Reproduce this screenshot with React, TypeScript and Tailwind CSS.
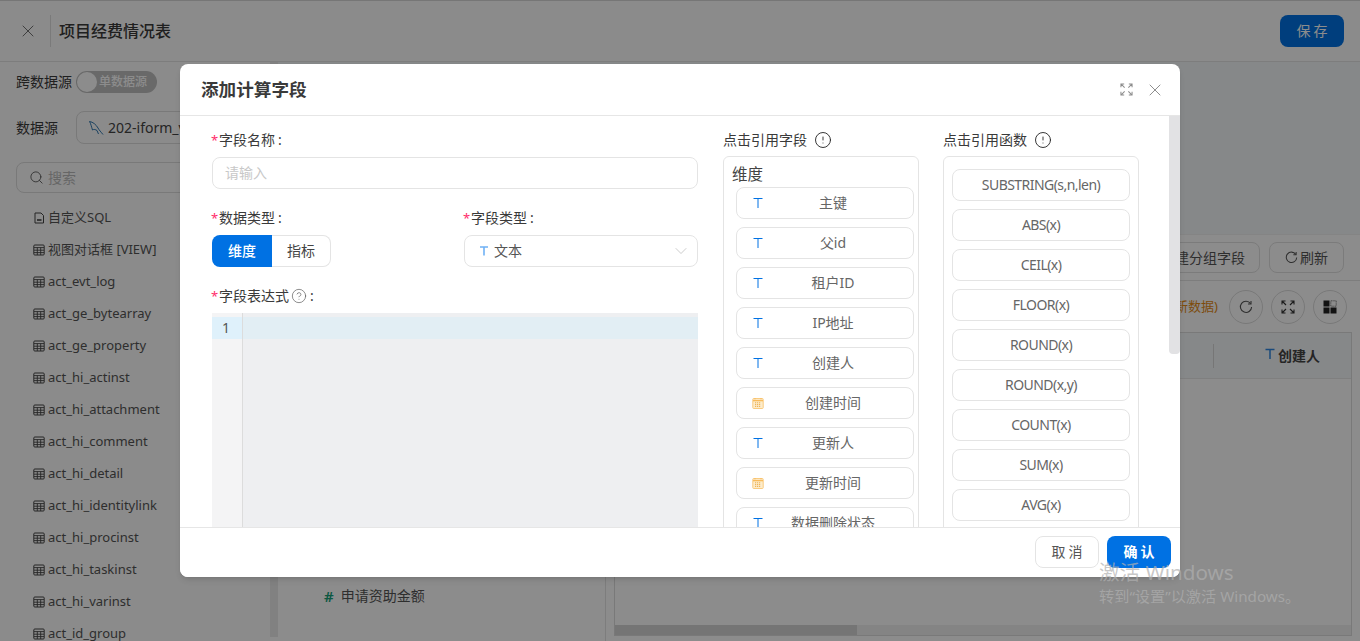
import React from "react";
import { X, ChevronDown, Search, CircleAlert, CircleHelp } from "lucide-react";

const font = { fontFamily: '"Noto Sans","Noto Sans CJK SC",sans-serif' };

const TIcon = ({ className = "" }: { className?: string }) => (
  <svg viewBox="0 0 12 12" width="12" height="12" className={className} fill="none">
    <path d="M1.5 1.5H10.5M6 1.5V11" stroke="#0071e3" strokeWidth="1" />
  </svg>
);
const Cal = () => (
  <svg viewBox="0 0 12 12" width="12" height="12" fill="none">
    <rect x="0.8" y="1.5" width="10.4" height="10" rx="0.8" fill="#fdeccb" stroke="#f9cb80" strokeWidth="1" />
    <path d="M1 3.6H11" stroke="#f7bb5c" strokeWidth="1.4" />
    <path d="M3 1V2.4M9 1V2.4" stroke="#f7bb5c" strokeWidth="1" />
    <path d="M3 5.8H9M3 7.6H9M3 9.4H9" stroke="#eaa840" strokeWidth="0.9" strokeDasharray="1.2 0.8" />
  </svg>
);
const TableIcon = () => (
  <svg viewBox="0 0 12 12" width="12" height="12" fill="none" className="shrink-0">
    <rect x="0.8" y="1" width="10.4" height="10" rx="1" stroke="#444" strokeWidth="1" />
    <path d="M1 3.6H11M1 6.2H11M1 8.6H11M4.3 3.6V11M7.7 3.6V11" stroke="#444" strokeWidth="0.9" />
  </svg>
);
const FileIcon = () => (
  <svg viewBox="0 0 12 12" width="12" height="12" fill="none" className="shrink-0">
    <path d="M2 1H8L10.5 3.5V11H2Z" stroke="#444" strokeWidth="1" />
    <path d="M4 8H8.5" stroke="#444" strokeWidth="1.6" />
  </svg>
);
const Expand = ({ size = 14, color = "#8c8c8c", w = 1.1 }: { size?: number; color?: string; w?: number }) => (
  <svg viewBox="0 0 14 14" width={size} height={size} fill="none" stroke={color} strokeWidth={w}>
    <path d="M1 4.5V1H4.5M1 1L5 5M9.5 1H13V4.5M13 1L9 5M1 9.5V13H4.5M1 13L5 9M13 9.5V13H9.5M13 13L9 9" />
  </svg>
);
const Refresh = ({ size = 14, color = "#555" }: { size?: number; color?: string }) => (
  <svg viewBox="0 0 14 14" width={size} height={size} fill="none" stroke={color} strokeWidth="1.1">
    <path d="M11.6 3.6A5.6 5.6 0 1 0 12.6 7" />
    <path d="M12 1V4H9" />
  </svg>
);
const Grid = () => (
  <svg viewBox="0 0 14 14" width="14" height="14">
    <rect x="0.5" y="0.5" width="6" height="6" fill="#222" />
    <rect x="7.8" y="0.8" width="5.4" height="5.4" fill="none" stroke="#444" strokeWidth="0.8" strokeDasharray="1 0.8" />
    <rect x="0.5" y="7.5" width="6" height="6" fill="#222" />
    <rect x="7.5" y="7.5" width="6" height="6" fill="#222" />
  </svg>
);
const Dolphin = () => (
  <svg viewBox="0 0 16 16" width="16" height="16" fill="none" stroke="#1a6aa8" strokeWidth="0.9" className="shrink-0">
    <path d="M1.5 1.5C5 2 8 4.5 10 8C11 10 13 12 15 14.5M1.5 1.5C3 4 3.5 7 4.5 10M4.5 10C6 9 7.5 9.5 9 10.5M9 10.5L10.5 14" />
  </svg>
);

const tables = ["act_evt_log", "act_ge_bytearray", "act_ge_property", "act_hi_actinst", "act_hi_attachment", "act_hi_comment", "act_hi_detail", "act_hi_identitylink", "act_hi_procinst", "act_hi_taskinst", "act_hi_varinst", "act_id_group"];

const fields: [string, "t" | "d"][] = [
  ["主键", "t"], ["父id", "t"], ["租户ID", "t"], ["IP地址", "t"], ["创建人", "t"],
  ["创建时间", "d"], ["更新人", "t"], ["更新时间", "d"], ["数据删除状态", "t"],
];
const funcs = ["SUBSTRING(s,n,len)", "ABS(x)", "CEIL(x)", "FLOOR(x)", "ROUND(x)", "ROUND(x,y)", "COUNT(x)", "SUM(x)", "AVG(x)"];

const Label = ({ children, className = "" }: { children: React.ReactNode; className?: string }) => (
  <div className={`flex items-center h-[22px] text-sm text-[#3a3a3a] ${className}`}>
    <span className="w-[7px] -ml-[1px] mr-[1px] text-[#ff2d6b] text-[13px] leading-none">*</span>
    {children}
    <span className="ml-[3px]">:</span>
  </div>
);

function Background() {
  return (
    <div className="w-[1360px] h-[641px] flex flex-col bg-white border-t border-[#d8d8d8]">
      <div className="h-[61px] shrink-0 flex items-center pl-[18px] pr-4 border-b border-[#e4e4e4] bg-[#fdfdfd]">
        <X size={20} strokeWidth={1.1} color="#666" />
        <div className="w-px h-8 bg-[#dedede] ml-3 mr-2" />
        <div className="text-base font-medium text-[#3a3a3a]">项目经费情况表</div>
        <div className="ml-auto w-16 h-8 rounded-lg bg-[#0071e3] text-white text-sm flex items-center justify-center tracking-[3px] pl-[3px]">保存</div>
      </div>
      <div className="flex-1 flex min-h-0">
        <div className="w-[270px] shrink-0 px-4 overflow-hidden bg-[#fdfdfd]">
          <div className="flex items-center h-[22px] mt-[9px] text-sm text-[#3a3a3a] whitespace-nowrap">
            跨数据源
            <div className="ml-[4px] w-[81px] h-[22px] rounded-full bg-[#bfbfbf] flex items-center pl-[1px] shrink-0">
              <div className="w-5 h-5 rounded-full bg-white" />
              <span className="ml-[2px] text-xs font-medium text-white">单数据源</span>
            </div>
          </div>
          <div className="flex items-center mt-[18px] text-sm text-[#3a3a3a]">
            <span className="w-[60px] shrink-0 whitespace-nowrap">数据源</span>
            <div className="w-[230px] h-[33px] shrink-0 border border-[#dcdcdc] rounded-lg flex items-center pl-[11px] gap-[4px]">
              <Dolphin />
              <span className="text-sm text-[#444] whitespace-nowrap">202-iform_v2</span>
            </div>
          </div>
          <div className="mt-[18px] w-[290px] h-[31px] border border-[#dcdcdc] rounded-lg flex items-center pl-[12px] gap-[4px] text-sm text-[#bbb]">
            <Search size={15} color="#555" strokeWidth={1.4} />
            搜索
          </div>
          <div className="mt-[8px] pl-[17px] text-[13px] text-[#555]">
            <div className="h-[33px] flex items-center gap-[3px]"><FileIcon />自定义SQL</div>
            <div className="h-[32px] flex items-center gap-[3px]"><TableIcon />视图对话框 [VIEW]</div>
            {tables.map((t) => (
              <div key={t} className="h-[32px] flex items-center gap-[3px]"><TableIcon />{t}</div>
            ))}
          </div>
        </div>
        <div className="w-2 shrink-0 mb-1 bg-[#ececec]" />
        <div className="flex-1 flex flex-col min-w-0">
          <div className="h-[173px] shrink-0 bg-[#f5f7fa] border-b border-[#f0f0f0]" />
          <div className="h-[46px] shrink-0 border-b border-[#e4e4e4] flex items-center justify-end gap-[9px] pr-4">
            <div className="h-[31px] w-[114px] border border-[#e0e0e0] rounded-lg text-sm text-[#555] flex items-center justify-center">新建分组字段</div>
            <div className="h-[31px] w-[75px] border border-[#e0e0e0] rounded-lg text-sm text-[#555] flex items-center justify-center gap-[2px]"><Refresh size={13} />刷新</div>
          </div>
          <div className="flex-1 flex min-h-0">
            <div className="w-[328px] shrink-0 border-r border-[#e4e4e4] flex flex-col justify-end pb-[34px] pl-[46px] text-sm text-[#555]">
              <div className="flex items-center gap-[7px]">
                <span className="text-[#16a078] font-semibold text-[15px]">#</span>申请资助金额
              </div>
            </div>
            <div className="flex-1 min-w-0 flex flex-col pl-2 pr-2 pb-[5px]">
              <div className="h-[51px] shrink-0 flex items-center justify-end gap-[8px] pr-[5px]">
                <span className="text-[13px] text-[#e58b17] mr-[3px]">新数据)</span>
                <div className="w-[34px] h-[34px] rounded-full border border-[#dcdcdc] flex items-center justify-center"><Refresh /></div>
                <div className="w-[34px] h-[34px] rounded-full border border-[#dcdcdc] flex items-center justify-center"><Expand color="#333" /></div>
                <div className="w-[34px] h-[34px] rounded-full border border-[#dcdcdc] flex items-center justify-center"><Grid /></div>
              </div>
              <div className="flex-1 border border-[#dcdcdc] flex flex-col min-h-0">
                <div className="h-[46px] shrink-0 bg-[#f5f7fa] border-b border-[#e8e8e8] flex items-center justify-end pr-[31px]">
                  <div className="w-px h-6 bg-[#d8d8d8] mr-[50px]" />
                  <svg viewBox="0 0 12 12" width="12" height="12" fill="none" className="mr-[2px] -mt-1"><path d="M1.5 1.5H10.5M6 1.5V11" stroke="#2f86e0" strokeWidth="1.5" /></svg>
                  <span className="text-sm font-semibold text-[#444]">创建人</span>
                </div>
                <div className="flex-1" />
                <div className="h-[10px] bg-[#f0f0f0]"><div className="w-[242px] h-full bg-[#d6d6d6]" /></div>
              </div>
            </div>
          </div>
        </div>
      </div>
    </div>
  );
}

function Modal() {
  return (
    <div className="absolute left-[180px] top-[64px] w-[1000px] h-[513px] bg-white rounded-lg flex flex-col overflow-hidden shadow-md">
      <div className="h-[52px] shrink-0 border-b border-[#e6e6e6] flex items-center pl-[21px] pr-[15px]">
        <div className="text-[17.6px] font-semibold text-[#3a3a3a] leading-none mt-[1px]">添加计算字段</div>
        <div className="ml-auto flex items-center gap-3">
          <Expand size={13} color="#8c8c8c" />
          <X size={20} color="#777" strokeWidth={1} />
        </div>
      </div>
      <div className="flex-1 min-h-0 flex relative overflow-hidden">
        <div className="w-[486px] ml-8 shrink-0 pt-[13px]">
          <Label className="mb-[6px]">字段名称</Label>
          <div className="h-8 border border-[#e4e4e4] rounded-lg flex items-center px-3 text-sm text-[#c8c8c8]">请输入</div>
          <div className="flex justify-between mt-[18px]">
            <div>
              <Label className="mb-[6px]">数据类型</Label>
              <div className="flex h-8 w-[119px] text-sm">
                <div className="w-[60px] rounded-l-lg bg-[#0071e3] text-white font-medium flex items-center justify-center">维度</div>
                <div className="w-[59px] rounded-r-lg border border-l-0 border-[#e4e4e4] text-[#444] flex items-center justify-center">指标</div>
              </div>
            </div>
            <div className="w-[234px]">
              <Label className="mb-[6px]">字段类型</Label>
              <div className="h-8 border border-[#e4e4e4] rounded-lg flex items-center pl-[13px] pr-[6px] text-sm text-[#555]">
                <svg viewBox="0 0 12 12" width="12" height="12" fill="none"><path d="M2 2H10M6 2V10.5" stroke="#6fb1f5" strokeWidth="1.6" /></svg>
                <span className="ml-[4px]">文本</span>
                <ChevronDown size={20} strokeWidth={0.9} color="#bbb" className="ml-auto" />
              </div>
            </div>
          </div>
          <div className="flex items-center h-[22px] mt-[18px] mb-[6px] text-sm text-[#3a3a3a]">
            <span className="w-[7px] -ml-[1px] mr-[1px] text-[#ff2d6b] text-[13px] leading-none">*</span>
            字段表达式
            <CircleHelp size={16} strokeWidth={1} color="#555" className="ml-[2px]" />
            <span className="ml-[3px]">:</span>
          </div>
          <div className="h-[300px] bg-[#eeeff1] pt-[4px] relative flex">
            <div className="w-[30px] h-full bg-[#f4f4f5] -mt-[4px] pt-[4px] border-r border-[#dcdcdc] box-content shrink-0">
              <div className="h-[22px] bg-[#dff1fb] text-sm text-[#555] pl-[10px] leading-[22px]">1</div>
            </div>
            <div className="flex-1 h-[22px] bg-[#e2eef4]" />
          </div>
        </div>
        <div className="w-[196px] ml-[25px] shrink-0 pt-[13px]">
          <div className="flex items-center h-[22px] mb-[5px] text-sm text-[#3a3a3a]">
            点击引用字段
            <CircleAlert size={18} strokeWidth={1.2} color="#222" className="ml-[7px]" />
          </div>
          <div className="border border-[#e4e4e4] rounded-md h-[400px] pl-3 pt-[5px]">
            <div className="text-[15.5px] leading-[25px] text-[#444] -ml-[4px]">维度</div>
            <div className="flex flex-col gap-2">
              {fields.map(([n, k]) => (
                <div key={n} className="w-[178px] h-8 shrink-0 border border-[#e4e4e4] rounded-lg flex items-center pl-[15px] pr-[11px] text-sm text-[#666]">
                  {k === "t" ? <TIcon /> : <Cal />}
                  <span className="flex-1 text-center whitespace-nowrap">{n}</span>
                </div>
              ))}
            </div>
          </div>
        </div>
        <div className="w-[196px] ml-6 shrink-0 pt-[13px]">
          <div className="flex items-center h-[22px] mb-[5px] text-sm text-[#3a3a3a]">
            点击引用函数
            <CircleAlert size={18} strokeWidth={1.2} color="#222" className="ml-[7px]" />
          </div>
          <div className="border border-[#e4e4e4] rounded-md h-[400px] pl-2 pt-3">
            <div className="flex flex-col gap-2">
              {funcs.map((n) => (
                <div key={n} className="w-[178px] h-8 shrink-0 border border-[#e4e4e4] rounded-lg flex items-center justify-center text-sm tracking-[-0.55px] text-[#666] whitespace-nowrap">{n}</div>
              ))}
            </div>
          </div>
        </div>
        <div className="absolute right-0 top-0 w-[11px] h-[238px] bg-[#e2e2e4] rounded-b-sm" />
      </div>
      <div className="h-[50px] shrink-0 border-t border-[#e6e6e6] bg-white flex items-start justify-end gap-2 pt-2 pr-[9px]">
        <div className="w-16 h-8 border border-[#e4e4e4] rounded-lg text-sm text-[#555] flex items-center justify-center tracking-[3px] pl-[3px]">取消</div>
        <div className="w-16 h-8 rounded-lg bg-[#0071e3] text-white text-sm font-semibold flex items-center justify-center tracking-[3px] pl-[3px]">确认</div>
      </div>
    </div>
  );
}

export default function App() {
  return (
    <div className="relative w-[1360px] h-[641px] overflow-hidden" style={font}>
      <Background />
      <div className="absolute inset-0 bg-black/45" />
      <Modal />
      <div className="absolute left-[1099px] top-[558px] text-[#b0b0b0]/70 pointer-events-none">
        <div className="text-[20.6px] leading-[28px] whitespace-nowrap">激活 Windows</div>
        <div className="text-[15.2px] leading-[20px] whitespace-nowrap">转到“设置”以激活 Windows。</div>
      </div>
    </div>
  );
}
